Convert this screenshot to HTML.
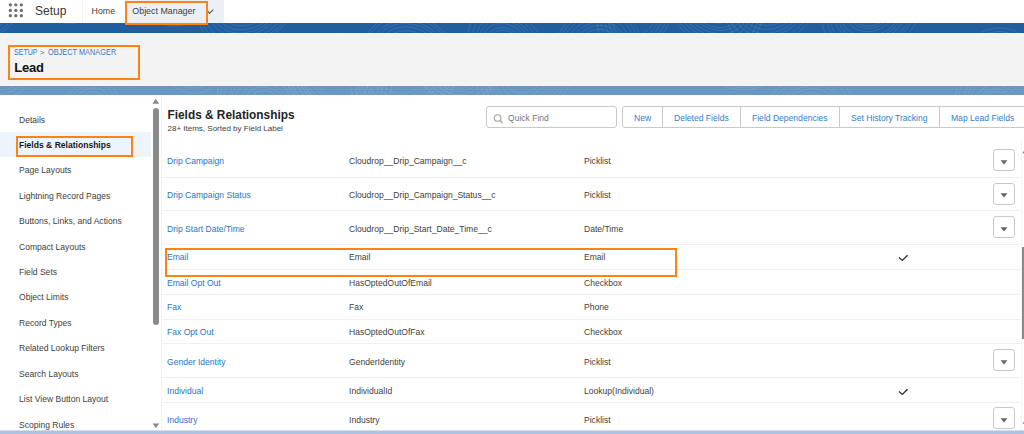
<!DOCTYPE html>
<html><head><meta charset="utf-8"><style>
html,body{margin:0;padding:0;width:1024px;height:434px;overflow:hidden;background:#fff;font-family:"Liberation Sans",sans-serif;}
.t{position:absolute;line-height:1;white-space:nowrap;}
.b{position:absolute;}
</style></head><body>
<svg class="b" style="left:0;top:0" width="30" height="22" viewBox="0 0 30 22"><g fill="#6e6e6e"><circle cx="10.35" cy="4.8" r="1.65"/><circle cx="15.8" cy="4.8" r="1.65"/><circle cx="21.35" cy="4.8" r="1.65"/><circle cx="10.35" cy="10.4" r="1.65"/><circle cx="15.8" cy="10.4" r="1.65"/><circle cx="21.35" cy="10.4" r="1.65"/><circle cx="10.35" cy="15.7" r="1.65"/><circle cx="15.8" cy="15.7" r="1.65"/><circle cx="21.35" cy="15.7" r="1.65"/></g></svg>
<div class="t" style="left:35.00px;top:4.94px;font-size:12px;color:#363636;">Setup</div>
<div class="b" style="left:82px;top:0px;width:1px;height:23px;background:#f2f2f2"></div>
<div class="t" style="left:91.60px;top:7.25px;font-size:8.8px;color:#3e3e3c;">Home</div>
<div class="b" style="left:125px;top:0px;width:99px;height:23px;background:#eaf0f5"></div>
<div class="t" style="left:132.30px;top:7.17px;font-size:8.9px;color:#3e3e3c;">Object Manager</div>
<svg class="b" style="left:207px;top:8px" width="8" height="7" viewBox="0 0 8 7"><path d="M0.6 3 L2.4 5.4 L6.4 1.6" fill="none" stroke="#5a5a5a" stroke-width="1.2"/></svg>
<div class="b" style="left:0px;top:23px;width:1024px;height:10px;background:#1f5fa0"></div>
<div class="b" style="left:0px;top:33px;width:1024px;height:53px;background:#f3f3f3"></div>
<div class="b" style="left:0px;top:86px;width:1024px;height:9px;background:#6896c5"></div>
<div class="b" style="left:0;top:23px;width:1024px;height:10px;overflow:hidden"><svg style="position:absolute;left:0;top:0" width="1024" height="10" viewBox="0 23 1024 10"><g fill="none" stroke="#fff" stroke-opacity="0.14" stroke-width="0.7"><ellipse cx="-7.0" cy="4.9" rx="23.0" ry="17.7" transform="rotate(-51 -7.0 4.9)"/><ellipse cx="-7.0" cy="4.9" rx="26.5" ry="20.4" transform="rotate(-51 -7.0 4.9)"/><ellipse cx="-7.0" cy="4.9" rx="31.6" ry="24.3" transform="rotate(-51 -7.0 4.9)"/><ellipse cx="-7.0" cy="4.9" rx="34.8" ry="26.8" transform="rotate(-51 -7.0 4.9)"/><ellipse cx="64.5" cy="0.6" rx="13.6" ry="10.4" transform="rotate(39 64.5 0.6)"/><ellipse cx="64.5" cy="0.6" rx="18.5" ry="14.2" transform="rotate(39 64.5 0.6)"/><ellipse cx="64.5" cy="0.6" rx="23.3" ry="17.9" transform="rotate(39 64.5 0.6)"/><ellipse cx="64.5" cy="0.6" rx="26.7" ry="20.6" transform="rotate(39 64.5 0.6)"/><ellipse cx="180.6" cy="0.4" rx="13.8" ry="10.6" transform="rotate(-25 180.6 0.4)"/><ellipse cx="180.6" cy="0.4" rx="18.3" ry="14.1" transform="rotate(-25 180.6 0.4)"/><ellipse cx="180.6" cy="0.4" rx="23.5" ry="18.1" transform="rotate(-25 180.6 0.4)"/><ellipse cx="180.6" cy="0.4" rx="26.4" ry="20.3" transform="rotate(-25 180.6 0.4)"/><ellipse cx="180.6" cy="0.4" rx="31.4" ry="24.1" transform="rotate(-25 180.6 0.4)"/><ellipse cx="248.4" cy="0.2" rx="26.3" ry="20.2" transform="rotate(-35 248.4 0.2)"/><ellipse cx="248.4" cy="0.2" rx="30.2" ry="23.2" transform="rotate(-35 248.4 0.2)"/><ellipse cx="248.4" cy="0.2" rx="34.9" ry="26.8" transform="rotate(-35 248.4 0.2)"/><ellipse cx="248.4" cy="0.2" rx="38.8" ry="29.8" transform="rotate(-35 248.4 0.2)"/><ellipse cx="248.4" cy="0.2" rx="42.7" ry="32.8" transform="rotate(-35 248.4 0.2)"/><ellipse cx="248.4" cy="0.2" rx="47.8" ry="36.8" transform="rotate(-35 248.4 0.2)"/><ellipse cx="248.4" cy="0.2" rx="51.8" ry="39.8" transform="rotate(-35 248.4 0.2)"/><ellipse cx="248.4" cy="0.2" rx="55.0" ry="42.3" transform="rotate(-35 248.4 0.2)"/><ellipse cx="343.2" cy="60.4" rx="13.0" ry="10.0" transform="rotate(13 343.2 60.4)"/><ellipse cx="343.2" cy="60.4" rx="16.5" ry="12.7" transform="rotate(13 343.2 60.4)"/><ellipse cx="343.2" cy="60.4" rx="21.0" ry="16.2" transform="rotate(13 343.2 60.4)"/><ellipse cx="343.2" cy="60.4" rx="26.3" ry="20.2" transform="rotate(13 343.2 60.4)"/><ellipse cx="343.2" cy="60.4" rx="29.5" ry="22.7" transform="rotate(13 343.2 60.4)"/><ellipse cx="343.2" cy="60.4" rx="34.7" ry="26.7" transform="rotate(13 343.2 60.4)"/><ellipse cx="408.4" cy="49.5" rx="24.1" ry="18.5" transform="rotate(11 408.4 49.5)"/><ellipse cx="408.4" cy="49.5" rx="29.0" ry="22.3" transform="rotate(11 408.4 49.5)"/><ellipse cx="408.4" cy="49.5" rx="33.4" ry="25.7" transform="rotate(11 408.4 49.5)"/><ellipse cx="408.4" cy="49.5" rx="36.6" ry="28.2" transform="rotate(11 408.4 49.5)"/><ellipse cx="408.4" cy="49.5" rx="41.2" ry="31.7" transform="rotate(11 408.4 49.5)"/><ellipse cx="408.4" cy="49.5" rx="44.1" ry="33.9" transform="rotate(11 408.4 49.5)"/><ellipse cx="507.0" cy="48.0" rx="19.9" ry="15.3" transform="rotate(46 507.0 48.0)"/><ellipse cx="507.0" cy="48.0" rx="22.9" ry="17.6" transform="rotate(46 507.0 48.0)"/><ellipse cx="507.0" cy="48.0" rx="27.6" ry="21.2" transform="rotate(46 507.0 48.0)"/><ellipse cx="507.0" cy="48.0" rx="31.5" ry="24.2" transform="rotate(46 507.0 48.0)"/><ellipse cx="507.0" cy="48.0" rx="35.1" ry="27.0" transform="rotate(46 507.0 48.0)"/><ellipse cx="507.0" cy="48.0" rx="39.4" ry="30.3" transform="rotate(46 507.0 48.0)"/><ellipse cx="507.0" cy="48.0" rx="44.5" ry="34.2" transform="rotate(46 507.0 48.0)"/><ellipse cx="597.7" cy="42.3" rx="16.8" ry="12.9" transform="rotate(-12 597.7 42.3)"/><ellipse cx="597.7" cy="42.3" rx="21.5" ry="16.6" transform="rotate(-12 597.7 42.3)"/><ellipse cx="597.7" cy="42.3" rx="25.9" ry="19.9" transform="rotate(-12 597.7 42.3)"/><ellipse cx="597.7" cy="42.3" rx="30.4" ry="23.4" transform="rotate(-12 597.7 42.3)"/><ellipse cx="597.7" cy="42.3" rx="35.1" ry="27.0" transform="rotate(-12 597.7 42.3)"/><ellipse cx="597.7" cy="42.3" rx="38.7" ry="29.7" transform="rotate(-12 597.7 42.3)"/><ellipse cx="597.7" cy="42.3" rx="42.2" ry="32.5" transform="rotate(-12 597.7 42.3)"/><ellipse cx="635.9" cy="9.5" rx="29.1" ry="22.4" transform="rotate(-59 635.9 9.5)"/><ellipse cx="635.9" cy="9.5" rx="33.5" ry="25.8" transform="rotate(-59 635.9 9.5)"/><ellipse cx="635.9" cy="9.5" rx="37.4" ry="28.7" transform="rotate(-59 635.9 9.5)"/><ellipse cx="635.9" cy="9.5" rx="42.3" ry="32.5" transform="rotate(-59 635.9 9.5)"/><ellipse cx="635.9" cy="9.5" rx="46.6" ry="35.8" transform="rotate(-59 635.9 9.5)"/><ellipse cx="713.5" cy="3.2" rx="19.8" ry="15.3" transform="rotate(36 713.5 3.2)"/><ellipse cx="713.5" cy="3.2" rx="23.4" ry="18.0" transform="rotate(36 713.5 3.2)"/><ellipse cx="713.5" cy="3.2" rx="28.6" ry="22.0" transform="rotate(36 713.5 3.2)"/><ellipse cx="713.5" cy="3.2" rx="31.7" ry="24.4" transform="rotate(36 713.5 3.2)"/><ellipse cx="713.5" cy="3.2" rx="35.8" ry="27.6" transform="rotate(36 713.5 3.2)"/><ellipse cx="713.5" cy="3.2" rx="40.3" ry="31.0" transform="rotate(36 713.5 3.2)"/><ellipse cx="713.5" cy="3.2" rx="44.3" ry="34.1" transform="rotate(36 713.5 3.2)"/><ellipse cx="713.5" cy="3.2" rx="48.9" ry="37.6" transform="rotate(36 713.5 3.2)"/><ellipse cx="713.5" cy="3.2" rx="52.5" ry="40.3" transform="rotate(36 713.5 3.2)"/><ellipse cx="774.6" cy="-10.6" rx="30.9" ry="23.8" transform="rotate(-57 774.6 -10.6)"/><ellipse cx="774.6" cy="-10.6" rx="34.2" ry="26.3" transform="rotate(-57 774.6 -10.6)"/><ellipse cx="774.6" cy="-10.6" rx="38.5" ry="29.6" transform="rotate(-57 774.6 -10.6)"/><ellipse cx="774.6" cy="-10.6" rx="42.9" ry="33.0" transform="rotate(-57 774.6 -10.6)"/><ellipse cx="774.6" cy="-10.6" rx="47.1" ry="36.2" transform="rotate(-57 774.6 -10.6)"/><ellipse cx="774.6" cy="-10.6" rx="50.8" ry="39.0" transform="rotate(-57 774.6 -10.6)"/><ellipse cx="774.6" cy="-10.6" rx="56.3" ry="43.3" transform="rotate(-57 774.6 -10.6)"/><ellipse cx="774.6" cy="-10.6" rx="60.8" ry="46.8" transform="rotate(-57 774.6 -10.6)"/><ellipse cx="871.2" cy="12.0" rx="17.9" ry="13.7" transform="rotate(-19 871.2 12.0)"/><ellipse cx="871.2" cy="12.0" rx="20.7" ry="15.9" transform="rotate(-19 871.2 12.0)"/><ellipse cx="871.2" cy="12.0" rx="24.6" ry="18.9" transform="rotate(-19 871.2 12.0)"/><ellipse cx="871.2" cy="12.0" rx="30.6" ry="23.5" transform="rotate(-19 871.2 12.0)"/><ellipse cx="871.2" cy="12.0" rx="33.9" ry="26.1" transform="rotate(-19 871.2 12.0)"/><ellipse cx="871.2" cy="12.0" rx="37.3" ry="28.7" transform="rotate(-19 871.2 12.0)"/><ellipse cx="871.2" cy="12.0" rx="42.3" ry="32.5" transform="rotate(-19 871.2 12.0)"/><ellipse cx="871.2" cy="12.0" rx="45.4" ry="34.9" transform="rotate(-19 871.2 12.0)"/><ellipse cx="871.2" cy="12.0" rx="50.6" ry="38.9" transform="rotate(-19 871.2 12.0)"/><ellipse cx="995.3" cy="54.5" rx="16.4" ry="12.6" transform="rotate(-17 995.3 54.5)"/><ellipse cx="995.3" cy="54.5" rx="20.5" ry="15.7" transform="rotate(-17 995.3 54.5)"/><ellipse cx="995.3" cy="54.5" rx="24.9" ry="19.1" transform="rotate(-17 995.3 54.5)"/><ellipse cx="995.3" cy="54.5" rx="29.0" ry="22.3" transform="rotate(-17 995.3 54.5)"/><ellipse cx="995.3" cy="54.5" rx="33.5" ry="25.8" transform="rotate(-17 995.3 54.5)"/></g></svg></div>
<div class="b" style="left:0;top:86px;width:1024px;height:9px;overflow:hidden"><svg style="position:absolute;left:0;top:0" width="1024" height="9" viewBox="0 86 1024 9"><g fill="none" stroke="#fff" stroke-opacity="0.13" stroke-width="0.7"><ellipse cx="-12.2" cy="55.6" rx="15.8" ry="12.1" transform="rotate(36 -12.2 55.6)"/><ellipse cx="-12.2" cy="55.6" rx="20.4" ry="15.7" transform="rotate(36 -12.2 55.6)"/><ellipse cx="-12.2" cy="55.6" rx="25.1" ry="19.3" transform="rotate(36 -12.2 55.6)"/><ellipse cx="-12.2" cy="55.6" rx="28.8" ry="22.2" transform="rotate(36 -12.2 55.6)"/><ellipse cx="-12.2" cy="55.6" rx="32.4" ry="24.9" transform="rotate(36 -12.2 55.6)"/><ellipse cx="-12.2" cy="55.6" rx="36.0" ry="27.7" transform="rotate(36 -12.2 55.6)"/><ellipse cx="-12.2" cy="55.6" rx="41.0" ry="31.5" transform="rotate(36 -12.2 55.6)"/><ellipse cx="-12.2" cy="55.6" rx="44.6" ry="34.3" transform="rotate(36 -12.2 55.6)"/><ellipse cx="-12.2" cy="55.6" rx="49.7" ry="38.2" transform="rotate(36 -12.2 55.6)"/><ellipse cx="90.1" cy="104.8" rx="15.1" ry="11.7" transform="rotate(-33 90.1 104.8)"/><ellipse cx="90.1" cy="104.8" rx="20.1" ry="15.5" transform="rotate(-33 90.1 104.8)"/><ellipse cx="90.1" cy="104.8" rx="24.8" ry="19.1" transform="rotate(-33 90.1 104.8)"/><ellipse cx="90.1" cy="104.8" rx="28.9" ry="22.2" transform="rotate(-33 90.1 104.8)"/><ellipse cx="186.2" cy="55.1" rx="29.2" ry="22.4" transform="rotate(49 186.2 55.1)"/><ellipse cx="186.2" cy="55.1" rx="32.8" ry="25.2" transform="rotate(49 186.2 55.1)"/><ellipse cx="186.2" cy="55.1" rx="36.4" ry="28.0" transform="rotate(49 186.2 55.1)"/><ellipse cx="186.2" cy="55.1" rx="41.7" ry="32.1" transform="rotate(49 186.2 55.1)"/><ellipse cx="268.8" cy="115.5" rx="26.7" ry="20.6" transform="rotate(54 268.8 115.5)"/><ellipse cx="268.8" cy="115.5" rx="30.8" ry="23.7" transform="rotate(54 268.8 115.5)"/><ellipse cx="268.8" cy="115.5" rx="35.0" ry="26.9" transform="rotate(54 268.8 115.5)"/><ellipse cx="268.8" cy="115.5" rx="40.7" ry="31.3" transform="rotate(54 268.8 115.5)"/><ellipse cx="268.8" cy="115.5" rx="44.6" ry="34.3" transform="rotate(54 268.8 115.5)"/><ellipse cx="268.8" cy="115.5" rx="47.5" ry="36.5" transform="rotate(54 268.8 115.5)"/><ellipse cx="268.8" cy="115.5" rx="53.0" ry="40.8" transform="rotate(54 268.8 115.5)"/><ellipse cx="268.8" cy="115.5" rx="57.4" ry="44.2" transform="rotate(54 268.8 115.5)"/><ellipse cx="268.8" cy="115.5" rx="61.0" ry="46.9" transform="rotate(54 268.8 115.5)"/><ellipse cx="336.2" cy="77.9" rx="23.9" ry="18.4" transform="rotate(18 336.2 77.9)"/><ellipse cx="336.2" cy="77.9" rx="27.0" ry="20.8" transform="rotate(18 336.2 77.9)"/><ellipse cx="336.2" cy="77.9" rx="32.1" ry="24.7" transform="rotate(18 336.2 77.9)"/><ellipse cx="336.2" cy="77.9" rx="36.1" ry="27.8" transform="rotate(18 336.2 77.9)"/><ellipse cx="336.2" cy="77.9" rx="39.1" ry="30.1" transform="rotate(18 336.2 77.9)"/><ellipse cx="336.2" cy="77.9" rx="43.3" ry="33.3" transform="rotate(18 336.2 77.9)"/><ellipse cx="336.2" cy="77.9" rx="47.6" ry="36.6" transform="rotate(18 336.2 77.9)"/><ellipse cx="336.2" cy="77.9" rx="51.6" ry="39.7" transform="rotate(18 336.2 77.9)"/><ellipse cx="336.2" cy="77.9" rx="56.5" ry="43.4" transform="rotate(18 336.2 77.9)"/><ellipse cx="404.0" cy="76.8" rx="21.7" ry="16.7" transform="rotate(-18 404.0 76.8)"/><ellipse cx="404.0" cy="76.8" rx="26.4" ry="20.3" transform="rotate(-18 404.0 76.8)"/><ellipse cx="404.0" cy="76.8" rx="29.7" ry="22.8" transform="rotate(-18 404.0 76.8)"/><ellipse cx="404.0" cy="76.8" rx="34.8" ry="26.8" transform="rotate(-18 404.0 76.8)"/><ellipse cx="404.0" cy="76.8" rx="38.1" ry="29.3" transform="rotate(-18 404.0 76.8)"/><ellipse cx="404.0" cy="76.8" rx="42.4" ry="32.6" transform="rotate(-18 404.0 76.8)"/><ellipse cx="404.0" cy="76.8" rx="46.5" ry="35.8" transform="rotate(-18 404.0 76.8)"/><ellipse cx="404.0" cy="76.8" rx="49.7" ry="38.2" transform="rotate(-18 404.0 76.8)"/><ellipse cx="404.0" cy="76.8" rx="54.7" ry="42.0" transform="rotate(-18 404.0 76.8)"/><ellipse cx="456.6" cy="73.7" rx="13.2" ry="10.1" transform="rotate(14 456.6 73.7)"/><ellipse cx="456.6" cy="73.7" rx="18.5" ry="14.3" transform="rotate(14 456.6 73.7)"/><ellipse cx="456.6" cy="73.7" rx="22.4" ry="17.2" transform="rotate(14 456.6 73.7)"/><ellipse cx="456.6" cy="73.7" rx="26.5" ry="20.4" transform="rotate(14 456.6 73.7)"/><ellipse cx="456.6" cy="73.7" rx="31.2" ry="24.0" transform="rotate(14 456.6 73.7)"/><ellipse cx="456.6" cy="73.7" rx="35.6" ry="27.4" transform="rotate(14 456.6 73.7)"/><ellipse cx="456.6" cy="73.7" rx="38.1" ry="29.3" transform="rotate(14 456.6 73.7)"/><ellipse cx="527.7" cy="64.3" rx="30.3" ry="23.3" transform="rotate(-57 527.7 64.3)"/><ellipse cx="527.7" cy="64.3" rx="35.0" ry="26.9" transform="rotate(-57 527.7 64.3)"/><ellipse cx="527.7" cy="64.3" rx="40.4" ry="31.1" transform="rotate(-57 527.7 64.3)"/><ellipse cx="527.7" cy="64.3" rx="43.8" ry="33.7" transform="rotate(-57 527.7 64.3)"/><ellipse cx="527.7" cy="64.3" rx="47.2" ry="36.3" transform="rotate(-57 527.7 64.3)"/><ellipse cx="527.7" cy="64.3" rx="51.5" ry="39.6" transform="rotate(-57 527.7 64.3)"/><ellipse cx="527.7" cy="64.3" rx="56.1" ry="43.2" transform="rotate(-57 527.7 64.3)"/><ellipse cx="527.7" cy="64.3" rx="60.9" ry="46.8" transform="rotate(-57 527.7 64.3)"/><ellipse cx="621.3" cy="128.3" rx="13.7" ry="10.5" transform="rotate(41 621.3 128.3)"/><ellipse cx="621.3" cy="128.3" rx="18.5" ry="14.2" transform="rotate(41 621.3 128.3)"/><ellipse cx="621.3" cy="128.3" rx="21.9" ry="16.8" transform="rotate(41 621.3 128.3)"/><ellipse cx="621.3" cy="128.3" rx="26.4" ry="20.3" transform="rotate(41 621.3 128.3)"/><ellipse cx="621.3" cy="128.3" rx="30.2" ry="23.2" transform="rotate(41 621.3 128.3)"/><ellipse cx="736.2" cy="52.2" rx="15.3" ry="11.8" transform="rotate(19 736.2 52.2)"/><ellipse cx="736.2" cy="52.2" rx="19.6" ry="15.1" transform="rotate(19 736.2 52.2)"/><ellipse cx="736.2" cy="52.2" rx="22.3" ry="17.2" transform="rotate(19 736.2 52.2)"/><ellipse cx="736.2" cy="52.2" rx="27.9" ry="21.5" transform="rotate(19 736.2 52.2)"/><ellipse cx="736.2" cy="52.2" rx="31.0" ry="23.8" transform="rotate(19 736.2 52.2)"/><ellipse cx="736.2" cy="52.2" rx="35.3" ry="27.2" transform="rotate(19 736.2 52.2)"/><ellipse cx="736.2" cy="52.2" rx="40.5" ry="31.1" transform="rotate(19 736.2 52.2)"/><ellipse cx="736.2" cy="52.2" rx="44.3" ry="34.1" transform="rotate(19 736.2 52.2)"/><ellipse cx="736.2" cy="52.2" rx="47.2" ry="36.3" transform="rotate(19 736.2 52.2)"/><ellipse cx="807.0" cy="114.3" rx="26.4" ry="20.3" transform="rotate(-22 807.0 114.3)"/><ellipse cx="807.0" cy="114.3" rx="31.6" ry="24.3" transform="rotate(-22 807.0 114.3)"/><ellipse cx="807.0" cy="114.3" rx="35.5" ry="27.3" transform="rotate(-22 807.0 114.3)"/><ellipse cx="807.0" cy="114.3" rx="38.9" ry="29.9" transform="rotate(-22 807.0 114.3)"/><ellipse cx="807.0" cy="114.3" rx="43.6" ry="33.6" transform="rotate(-22 807.0 114.3)"/><ellipse cx="807.0" cy="114.3" rx="48.4" ry="37.2" transform="rotate(-22 807.0 114.3)"/><ellipse cx="874.6" cy="51.3" rx="18.2" ry="14.0" transform="rotate(-50 874.6 51.3)"/><ellipse cx="874.6" cy="51.3" rx="20.9" ry="16.1" transform="rotate(-50 874.6 51.3)"/><ellipse cx="874.6" cy="51.3" rx="26.2" ry="20.2" transform="rotate(-50 874.6 51.3)"/><ellipse cx="874.6" cy="51.3" rx="30.5" ry="23.5" transform="rotate(-50 874.6 51.3)"/><ellipse cx="1001.5" cy="113.9" rx="24.4" ry="18.8" transform="rotate(50 1001.5 113.9)"/><ellipse cx="1001.5" cy="113.9" rx="27.3" ry="21.0" transform="rotate(50 1001.5 113.9)"/><ellipse cx="1001.5" cy="113.9" rx="31.4" ry="24.2" transform="rotate(50 1001.5 113.9)"/><ellipse cx="1001.5" cy="113.9" rx="36.8" ry="28.3" transform="rotate(50 1001.5 113.9)"/><ellipse cx="1001.5" cy="113.9" rx="40.5" ry="31.1" transform="rotate(50 1001.5 113.9)"/><ellipse cx="1001.5" cy="113.9" rx="44.0" ry="33.8" transform="rotate(50 1001.5 113.9)"/><ellipse cx="1001.5" cy="113.9" rx="49.8" ry="38.3" transform="rotate(50 1001.5 113.9)"/><ellipse cx="1001.5" cy="113.9" rx="53.4" ry="41.1" transform="rotate(50 1001.5 113.9)"/></g></svg></div>
<div class="t" style="left:13.90px;top:48.00px;font-size:9.1px;color:#3f78b5;transform:scaleX(0.775);transform-origin:0 0;">SETUP</div>
<div class="t" style="left:39.80px;top:48.93px;font-size:8px;color:#706e6b;">&gt;</div>
<div class="t" style="left:47.90px;top:48.00px;font-size:9.1px;color:#3f78b5;transform:scaleX(0.81);transform-origin:0 0;">OBJECT MANAGER</div>
<div class="t" style="left:14.20px;top:61.20px;font-size:13px;color:#111;font-weight:700;letter-spacing:-0.2px;">Lead</div>
<div class="b" style="left:0px;top:132px;width:151px;height:25px;background:#eef4fb"></div>
<div class="t" style="left:19.20px;top:115.53px;font-size:9.3px;color:#3e3e3c;transform:scaleX(0.92);transform-origin:0 0;">Details</div>
<div class="t" style="left:19.30px;top:140.85px;font-size:9.3px;color:#181818;font-weight:700;transform:scaleX(0.92);transform-origin:0 0;">Fields &amp; Relationships</div>
<div class="t" style="left:19.20px;top:166.37px;font-size:9.3px;color:#3e3e3c;transform:scaleX(0.92);transform-origin:0 0;">Page Layouts</div>
<div class="t" style="left:19.20px;top:191.79px;font-size:9.3px;color:#3e3e3c;transform:scaleX(0.92);transform-origin:0 0;">Lightning Record Pages</div>
<div class="t" style="left:19.20px;top:217.21px;font-size:9.3px;color:#3e3e3c;transform:scaleX(0.92);transform-origin:0 0;">Buttons, Links, and Actions</div>
<div class="t" style="left:19.20px;top:242.63px;font-size:9.3px;color:#3e3e3c;transform:scaleX(0.92);transform-origin:0 0;">Compact Layouts</div>
<div class="t" style="left:19.20px;top:268.05px;font-size:9.3px;color:#3e3e3c;transform:scaleX(0.92);transform-origin:0 0;">Field Sets</div>
<div class="t" style="left:19.20px;top:293.47px;font-size:9.3px;color:#3e3e3c;transform:scaleX(0.92);transform-origin:0 0;">Object Limits</div>
<div class="t" style="left:19.20px;top:318.89px;font-size:9.3px;color:#3e3e3c;transform:scaleX(0.92);transform-origin:0 0;">Record Types</div>
<div class="t" style="left:19.20px;top:344.31px;font-size:9.3px;color:#3e3e3c;transform:scaleX(0.92);transform-origin:0 0;">Related Lookup Filters</div>
<div class="t" style="left:19.20px;top:369.73px;font-size:9.3px;color:#3e3e3c;transform:scaleX(0.92);transform-origin:0 0;">Search Layouts</div>
<div class="t" style="left:19.20px;top:395.15px;font-size:9.3px;color:#3e3e3c;transform:scaleX(0.92);transform-origin:0 0;">List View Button Layout</div>
<div class="t" style="left:19.20px;top:420.57px;font-size:9.3px;color:#3e3e3c;transform:scaleX(0.92);transform-origin:0 0;">Scoping Rules</div>
<svg class="b" style="left:152px;top:98px" width="8" height="6" viewBox="0 0 8 6"><path d="M0.4 5.8 L3.7 0.8 L7.2 5.8 Z" fill="#8a8a8a"/></svg>
<div class="b" style="left:152.7px;top:108px;width:6.3px;height:217px;background:#8a8a8a;border-radius:3px"></div>
<svg class="b" style="left:152px;top:422.5px" width="8" height="6" viewBox="0 0 8 6"><path d="M0.6 0.5 L7.2 0.5 L3.9 5.2 Z" fill="#8a8a8a"/></svg>
<div class="b" style="left:161px;top:95px;width:1px;height:335px;background:#f2f2f2"></div>
<div class="t" style="left:167.50px;top:109.97px;font-size:11.85px;color:#232323;font-weight:700;">Fields &amp; Relationships</div>
<div class="t" style="left:167.50px;top:124.63px;font-size:8px;color:#3e3e3c;">28+ Items, Sorted by Field Label</div>
<div class="b" style="left:486px;top:106px;width:131px;height:22px;border:1px solid #c9c9c9;border-radius:3px;box-sizing:border-box;background:#fff"></div>
<svg class="b" style="left:493px;top:113px" width="11" height="11" viewBox="0 0 11 11"><circle cx="4.6" cy="5" r="3.3" fill="none" stroke="#a0a0a0" stroke-width="1.1"/><path d="M7 7.4 L9.6 10" stroke="#a0a0a0" stroke-width="1.2"/></svg>
<div class="t" style="left:508.30px;top:114.23px;font-size:9.3px;color:#7a7876;transform:scaleX(0.92);transform-origin:0 0;">Quick Find</div>
<div class="b" style="left:622px;top:106px;width:410px;height:22px;border:1px solid #c9c9c9;border-radius:3px;box-sizing:border-box;background:#fff"></div>
<div class="b" style="left:662px;top:106px;width:1px;height:22px;background:#c9c9c9"></div>
<div class="b" style="left:740px;top:106px;width:1px;height:22px;background:#c9c9c9"></div>
<div class="b" style="left:839px;top:106px;width:1px;height:22px;background:#c9c9c9"></div>
<div class="b" style="left:939px;top:106px;width:1px;height:22px;background:#c9c9c9"></div>
<div class="t" style="left:634.30px;top:113.93px;font-size:9.3px;color:#2a7fd0;transform:scaleX(0.92);transform-origin:0 0;">New</div>
<div class="t" style="left:674.20px;top:113.93px;font-size:9.3px;color:#2a7fd0;transform:scaleX(0.92);transform-origin:0 0;">Deleted Fields</div>
<div class="t" style="left:751.70px;top:113.93px;font-size:9.3px;color:#2a7fd0;transform:scaleX(0.92);transform-origin:0 0;">Field Dependencies</div>
<div class="t" style="left:850.50px;top:113.93px;font-size:9.3px;color:#2a7fd0;transform:scaleX(0.92);transform-origin:0 0;">Set History Tracking</div>
<div class="t" style="left:950.50px;top:113.93px;font-size:9.3px;color:#2a7fd0;transform:scaleX(0.92);transform-origin:0 0;">Map Lead Fields</div>
<div class="b" style="left:161px;top:177px;width:860px;height:1px;background:#f0f0f0"></div>
<div class="t" style="left:166.80px;top:157.43px;font-size:9.3px;color:#2c73c4;transform:scaleX(0.92);transform-origin:0 0;">Drip Campaign</div>
<div class="t" style="left:349.20px;top:157.43px;font-size:9.3px;color:#3e3e3c;transform:scaleX(0.92);transform-origin:0 0;">Cloudrop__Drip_Campaign__c</div>
<div class="t" style="left:584.20px;top:157.43px;font-size:9.3px;color:#3e3e3c;transform:scaleX(0.92);transform-origin:0 0;">Picklist</div>
<div class="b" style="left:993px;top:149.2px;width:22px;height:22px;border:1px solid #c9c9c9;border-radius:3px;box-sizing:border-box;background:#fff"></div>
<svg class="b" style="left:1000px;top:159.8px" width="8" height="5" viewBox="0 0 8 5"><path d="M0.5 0.3 L7.5 0.3 L4 4.5 Z" fill="#666"/></svg>
<div class="b" style="left:161px;top:210px;width:860px;height:1px;background:#f0f0f0"></div>
<div class="t" style="left:166.80px;top:191.13px;font-size:9.3px;color:#2c73c4;transform:scaleX(0.92);transform-origin:0 0;">Drip Campaign Status</div>
<div class="t" style="left:349.20px;top:191.13px;font-size:9.3px;color:#3e3e3c;transform:scaleX(0.92);transform-origin:0 0;">Cloudrop__Drip_Campaign_Status__c</div>
<div class="t" style="left:584.20px;top:191.13px;font-size:9.3px;color:#3e3e3c;transform:scaleX(0.92);transform-origin:0 0;">Picklist</div>
<div class="b" style="left:993px;top:182.7px;width:22px;height:22px;border:1px solid #c9c9c9;border-radius:3px;box-sizing:border-box;background:#fff"></div>
<svg class="b" style="left:1000px;top:193.2px" width="8" height="5" viewBox="0 0 8 5"><path d="M0.5 0.3 L7.5 0.3 L4 4.5 Z" fill="#666"/></svg>
<div class="b" style="left:161px;top:244px;width:860px;height:1px;background:#f0f0f0"></div>
<div class="t" style="left:166.80px;top:224.63px;font-size:9.3px;color:#2c73c4;transform:scaleX(0.92);transform-origin:0 0;">Drip Start Date/Time</div>
<div class="t" style="left:349.20px;top:224.63px;font-size:9.3px;color:#3e3e3c;transform:scaleX(0.92);transform-origin:0 0;">Cloudrop__Drip_Start_Date_Time__c</div>
<div class="t" style="left:584.20px;top:224.63px;font-size:9.3px;color:#3e3e3c;transform:scaleX(0.92);transform-origin:0 0;">Date/Time</div>
<div class="b" style="left:993px;top:216.4px;width:22px;height:22px;border:1px solid #c9c9c9;border-radius:3px;box-sizing:border-box;background:#fff"></div>
<svg class="b" style="left:1000px;top:226.9px" width="8" height="5" viewBox="0 0 8 5"><path d="M0.5 0.3 L7.5 0.3 L4 4.5 Z" fill="#666"/></svg>
<div class="b" style="left:161px;top:269px;width:860px;height:1px;background:#f0f0f0"></div>
<div class="t" style="left:166.80px;top:253.13px;font-size:9.3px;color:#2c73c4;transform:scaleX(0.92);transform-origin:0 0;">Email</div>
<div class="t" style="left:349.20px;top:253.13px;font-size:9.3px;color:#3e3e3c;transform:scaleX(0.92);transform-origin:0 0;">Email</div>
<div class="t" style="left:584.20px;top:253.13px;font-size:9.3px;color:#3e3e3c;transform:scaleX(0.92);transform-origin:0 0;">Email</div>
<svg class="b" style="left:897px;top:255.1px" width="12" height="8" viewBox="0 0 12 8"><path d="M2 2.5 L5.3 5.4 L10.6 0.2" fill="none" stroke="#2b2b2b" stroke-width="1.3"/></svg>
<div class="b" style="left:161px;top:294px;width:860px;height:1px;background:#f0f0f0"></div>
<div class="t" style="left:166.80px;top:278.63px;font-size:9.3px;color:#2c73c4;transform:scaleX(0.92);transform-origin:0 0;">Email Opt Out</div>
<div class="t" style="left:349.20px;top:278.63px;font-size:9.3px;color:#3e3e3c;transform:scaleX(0.92);transform-origin:0 0;">HasOptedOutOfEmail</div>
<div class="t" style="left:584.20px;top:278.63px;font-size:9.3px;color:#3e3e3c;transform:scaleX(0.92);transform-origin:0 0;">Checkbox</div>
<div class="b" style="left:161px;top:319px;width:860px;height:1px;background:#f0f0f0"></div>
<div class="t" style="left:166.80px;top:303.13px;font-size:9.3px;color:#2c73c4;transform:scaleX(0.92);transform-origin:0 0;">Fax</div>
<div class="t" style="left:349.20px;top:303.13px;font-size:9.3px;color:#3e3e3c;transform:scaleX(0.92);transform-origin:0 0;">Fax</div>
<div class="t" style="left:584.20px;top:303.13px;font-size:9.3px;color:#3e3e3c;transform:scaleX(0.92);transform-origin:0 0;">Phone</div>
<div class="b" style="left:161px;top:343px;width:860px;height:1px;background:#f0f0f0"></div>
<div class="t" style="left:166.80px;top:328.13px;font-size:9.3px;color:#2c73c4;transform:scaleX(0.92);transform-origin:0 0;">Fax Opt Out</div>
<div class="t" style="left:349.20px;top:328.13px;font-size:9.3px;color:#3e3e3c;transform:scaleX(0.92);transform-origin:0 0;">HasOptedOutOfFax</div>
<div class="t" style="left:584.20px;top:328.13px;font-size:9.3px;color:#3e3e3c;transform:scaleX(0.92);transform-origin:0 0;">Checkbox</div>
<div class="b" style="left:161px;top:377px;width:860px;height:1px;background:#f0f0f0"></div>
<div class="t" style="left:166.80px;top:358.13px;font-size:9.3px;color:#2c73c4;transform:scaleX(0.92);transform-origin:0 0;">Gender Identity</div>
<div class="t" style="left:349.20px;top:358.13px;font-size:9.3px;color:#3e3e3c;transform:scaleX(0.92);transform-origin:0 0;">GenderIdentity</div>
<div class="t" style="left:584.20px;top:358.13px;font-size:9.3px;color:#3e3e3c;transform:scaleX(0.92);transform-origin:0 0;">Picklist</div>
<div class="b" style="left:993px;top:349.4px;width:22px;height:22px;border:1px solid #c9c9c9;border-radius:3px;box-sizing:border-box;background:#fff"></div>
<svg class="b" style="left:1000px;top:359.9px" width="8" height="5" viewBox="0 0 8 5"><path d="M0.5 0.3 L7.5 0.3 L4 4.5 Z" fill="#666"/></svg>
<div class="b" style="left:161px;top:402px;width:860px;height:1px;background:#f0f0f0"></div>
<div class="t" style="left:166.80px;top:386.93px;font-size:9.3px;color:#2c73c4;transform:scaleX(0.92);transform-origin:0 0;">Individual</div>
<div class="t" style="left:349.20px;top:386.93px;font-size:9.3px;color:#3e3e3c;transform:scaleX(0.92);transform-origin:0 0;">IndividualId</div>
<div class="t" style="left:584.20px;top:386.93px;font-size:9.3px;color:#3e3e3c;transform:scaleX(0.92);transform-origin:0 0;">Lookup(Individual)</div>
<svg class="b" style="left:897px;top:388.9px" width="12" height="8" viewBox="0 0 12 8"><path d="M2 2.5 L5.3 5.4 L10.6 0.2" fill="none" stroke="#2b2b2b" stroke-width="1.3"/></svg>
<div class="t" style="left:166.80px;top:416.23px;font-size:9.3px;color:#2c73c4;transform:scaleX(0.92);transform-origin:0 0;">Industry</div>
<div class="t" style="left:349.20px;top:416.23px;font-size:9.3px;color:#3e3e3c;transform:scaleX(0.92);transform-origin:0 0;">Industry</div>
<div class="t" style="left:584.20px;top:416.23px;font-size:9.3px;color:#3e3e3c;transform:scaleX(0.92);transform-origin:0 0;">Picklist</div>
<div class="b" style="left:993px;top:407.3px;width:22px;height:22px;border:1px solid #c9c9c9;border-radius:3px;box-sizing:border-box;background:#fff"></div>
<svg class="b" style="left:1000px;top:417.8px" width="8" height="5" viewBox="0 0 8 5"><path d="M0.5 0.3 L7.5 0.3 L4 4.5 Z" fill="#666"/></svg>
<svg class="b" style="left:1020px;top:148px" width="4" height="7" viewBox="0 0 4 7"><path d="M2.3 5.2 L5.5 1.2 L8 5.2 Z" fill="#777"/></svg>
<svg class="b" style="left:1020px;top:421px" width="4" height="6" viewBox="0 0 4 6"><path d="M2.3 1.5 L8 1.5 L5.2 4.6 Z" fill="#777"/></svg>
<div class="b" style="left:1021px;top:140px;width:1px;height:290px;background:#f6f6f6"></div>
<div class="b" style="left:1022.4px;top:247px;width:1.6px;height:92px;background:#8a8a8a"></div>
<div class="b" style="left:0px;top:430px;width:1024px;height:1px;background:#d3deee"></div>
<div class="b" style="left:0px;top:431px;width:1024px;height:3px;background:#afc2de"></div>
<div class="b" style="left:125px;top:1px;width:82.5px;height:23.5px;border:2px solid #fe8214;box-sizing:border-box"></div>
<div class="b" style="left:8px;top:45px;width:132px;height:34.5px;border:2px solid #fe8214;box-sizing:border-box"></div>
<div class="b" style="left:16px;top:136px;width:117px;height:21px;border:2px solid #fe8214;box-sizing:border-box"></div>
<div class="b" style="left:165.3px;top:248px;width:511.5px;height:29px;border:2px solid #fe8214;box-sizing:border-box"></div>
</body></html>
